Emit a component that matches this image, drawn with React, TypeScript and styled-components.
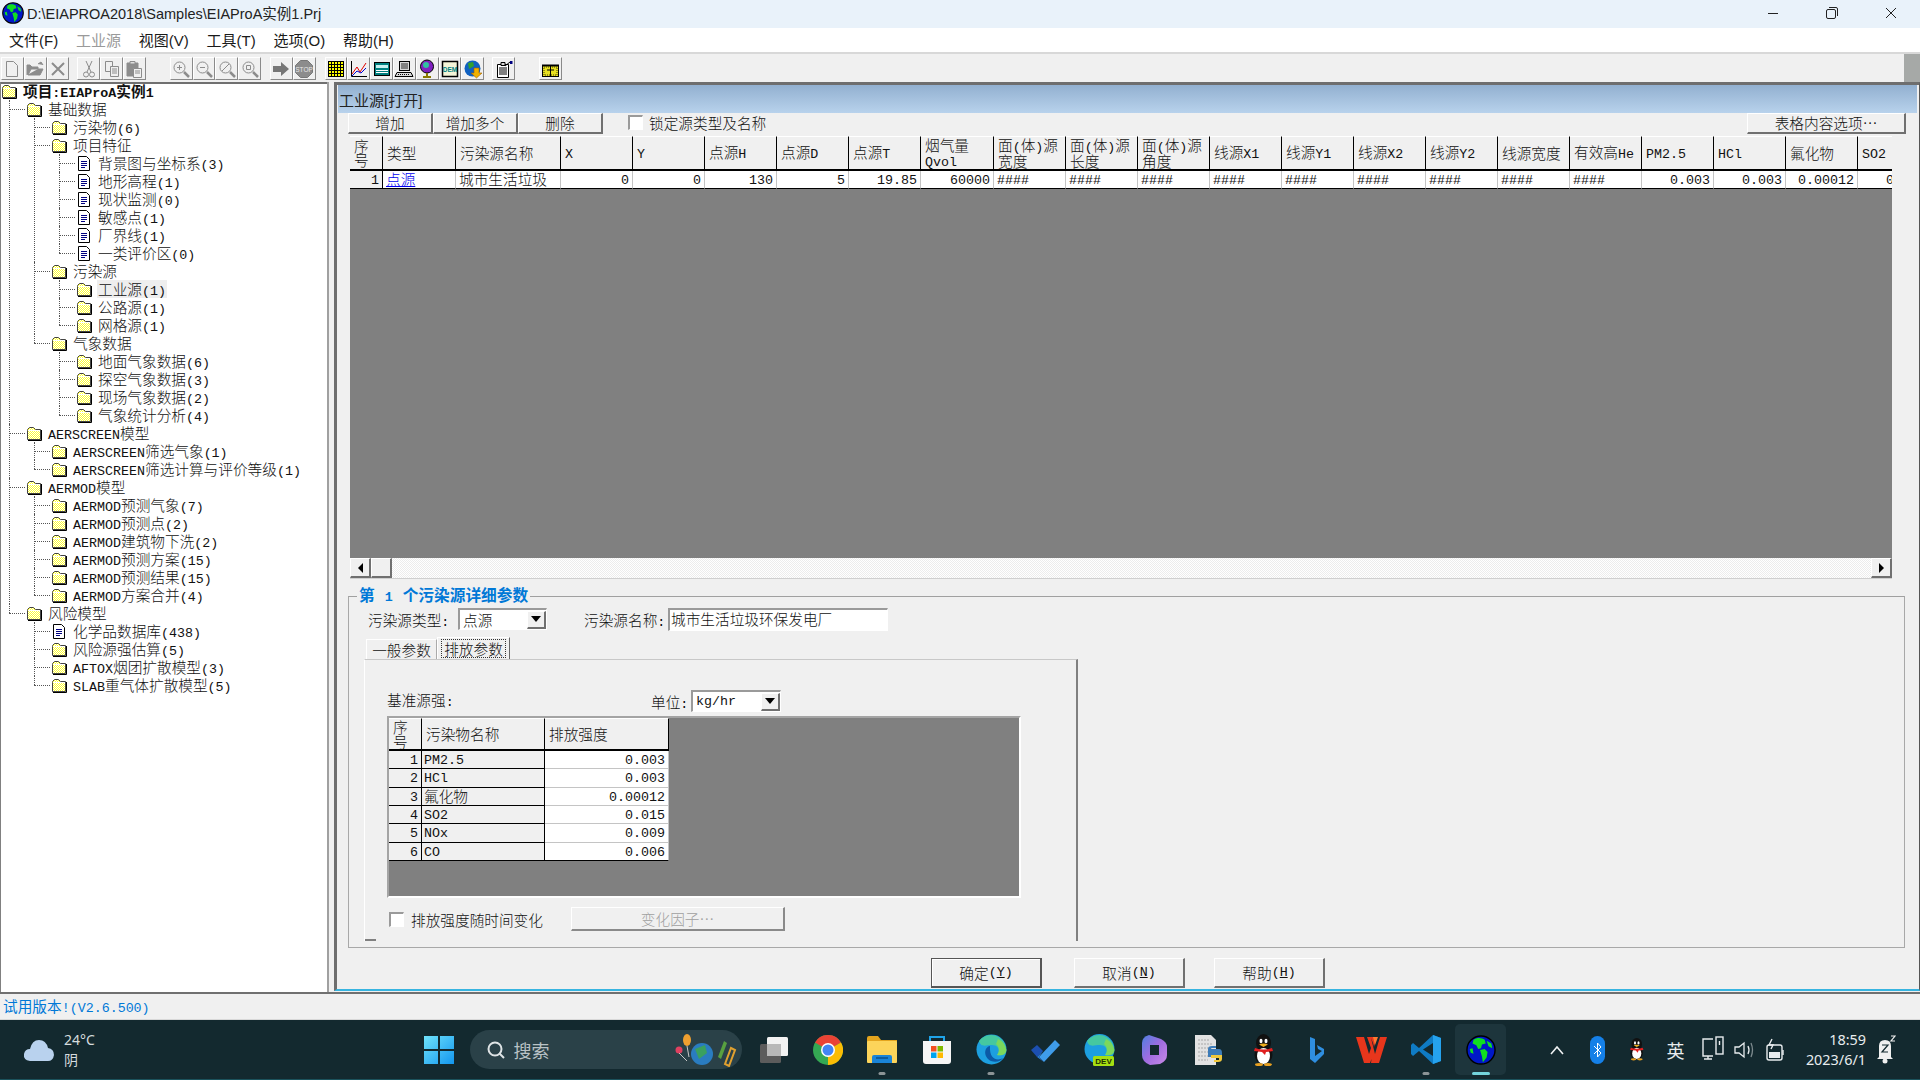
import React from "react";
import styled, { createGlobalStyle, css } from "styled-components";

const CJK = `"Noto Sans CJK SC", "Noto Sans", sans-serif`;
const MONO = `"Liberation Mono", "Noto Sans CJK SC", monospace`;
const SANS = `"Liberation Sans", "Noto Sans CJK SC", sans-serif`;

const Global = createGlobalStyle`
  html, body { margin: 0; padding: 0; background: #f0f0f0; }
  * { box-sizing: border-box; }
`;

const raised = css`
  border-style: solid;
  border-width: 1px 2px 2px 1px;
  border-color: #fff #707070 #707070 #fff;
  background: #f0f0f0;
`;
const sunken = css`
  border-style: solid;
  border-width: 2px 1px 1px 2px;
  border-color: #9a9a9a #fff #fff #9a9a9a;
`;

const Page = styled.div`
  width: 1920px; height: 1080px; overflow: hidden; display: flex; flex-direction: column;
  background: #f0f0f0; font-family: ${CJK}; font-size: 14.67px; color: #111; font-weight: 300;
`;
const TitleBar = styled.div`
  height: 28px; background: #e9f2fa; display: flex; align-items: center; padding: 0 0 2px 2px; flex: none;
`;
const TitleText = styled.span`
  margin-left: 3px; padding-bottom: 2px; font: 400 14.5px ${SANS}; color: #222;
`;
const WinControls = styled.div`margin-left: auto; display: flex;`;
const WinBtn = styled.div`width: 59px; height: 26px; display: flex; align-items: center; justify-content: center;`;

const MenuBar = styled.div`
  height: 24px; background: #fff; display: flex; align-items: center; padding: 0 0 2px 9px; gap: 17.8px; flex: none;
`;
const MenuItem = styled.span<{ $off?: boolean }>`
  font: 400 15px ${SANS}; color: ${(p) => (p.$off ? "#9a9a9a" : "#1a1a1a")};
`;

const ToolBar = styled.div`
  height: 30px; flex: none; display: flex; padding: 3px 0 0 1px; background: #f0f0f0;
  border-top: 2px solid #d8d8d8; position: relative;
`;
const ToolGroup = styled.div<{ $ml: number }>`display: flex; margin-left: ${(p) => p.$ml}px;`;
const ToolBtn = styled.div`
  width: 22.8px; height: 23px; display: flex; align-items: center; justify-content: center;
  border: 1px solid; border-color: #fff #8a8a8a #8a8a8a #fff;
`;
const ToolEnd = styled.div`margin: -3px 0 0 auto; width: 16px; height: 28px; background: #a6a9a7;`;

const Main = styled.div`display: flex; height: 910px; flex: none;`;

const TreePane = styled.div`
  width: 329px; flex: none; background: #fff; overflow: hidden; box-shadow: inset 0 2px 0 #707070;
  border-left: 1px solid #808080; border-right: 2px solid #a0a0a0;
`;
const TreeList = styled.ul<{ $nested?: boolean }>`
  list-style: none; margin: 0; padding: 0 0 0 ${(p) => (p.$nested ? 25 : 0)}px;
`;
const TreeItem = styled.li<{ $root?: boolean }>`
  position: relative;
  ${(p) =>
    !p.$root &&
    css`
      &::before { content: ""; position: absolute; left: -17px; top: 9px; width: 16px; border-top: 1px dotted #555; }
      &::after { content: ""; position: absolute; left: -17px; top: 0; bottom: 0; border-left: 1px dotted #555; }
      &:last-child::after { bottom: auto; height: 9px; }
    `}
`;
const TreeRow = styled.div`height: 18px; display: flex; align-items: center; gap: 5px; white-space: nowrap;`;
const TreeLabel = styled.span<{ $sel?: boolean; $bold?: boolean }>`
  padding: 0 1px; line-height: 18px; background: ${(p) => (p.$sel ? "#eeeeee" : "transparent")};
  font-weight: ${(p) => (p.$bold ? 700 : 300)}; color: #111;
`;
const Lat = styled.span`font-family: ${MONO}; font-size: 13.33px; font-weight: inherit; line-height: 1;`;

const Panel = styled.div`
  margin-left: 5px; width: 1586px; height: 909px; flex: none; position: relative;
  border-top: 3px solid #6e6e6e; border-left: 3px solid #6e6e6e; border-right: 1px solid #555;
  border-bottom: 2px solid #37b4e0; padding-left: 1px;
`;
const PanelHead = styled.div`
  height: 28px; margin-right: 2px; background: linear-gradient(#92b0d0, #b8d2ec);
  display: flex; align-items: flex-end; padding: 0 0 3px 1px; font: 400 15px ${SANS}; color: #222;
`;
const ActRow = styled.div`display: flex; height: 21px; padding-left: 10px; align-items: stretch; margin-bottom: 2px;`;
const ActBtn = styled.div`
  ${raised}; width: 85px; display: flex; align-items: center; justify-content: center; font-size: 14.67px; padding-bottom: 2px;
`;
const Check = styled.span`
  ${sunken}; display: inline-block; width: 15px; height: 15px; background: #fff; flex: none;
`;
const LockLabel = styled.label`display: flex; align-items: center; gap: 6px; margin-left: 25px; padding-bottom: 2px;`;
const OptBtn = styled(ActBtn)`width: 159px; margin-left: auto; margin-right: 13px;`;

const GridFrame = styled.div`
  margin-left: 12px; width: 1542px; height: 422px; background: #808080; overflow: hidden;
`;
const Table = styled.table<{ $w: number }>`
  table-layout: fixed; border-collapse: separate; border-spacing: 0; width: ${(p) => p.$w}px;
  font-size: 14.67px; background: transparent;
`;
const Head = styled.th`
  height: 33px; padding: 1px 0 0 4px; background: #f0f0f0; text-align: left; font-weight: 300;
  border-right: 1px solid #000; border-bottom: 2px solid #000; border-top: 1px solid #fff;
  line-height: 14.5px; overflow: hidden; vertical-align: middle; white-space: nowrap;
`;
const Cell = styled.td<{ $right?: boolean; $fixed?: boolean; $grid?: boolean; $tight?: boolean }>`
  height: 18px; padding: 0 ${(p) => (p.$tight ? 2 : 3)}px 1px; background: ${(p) => (p.$fixed ? "#f0f0f0" : "#fff")};
  text-align: ${(p) => (p.$right ? "right" : "left")}; overflow: hidden; white-space: nowrap;
  border-right: 1px solid ${(p) => (p.$fixed ? "#000" : "#c4c4c4")};
  border-bottom: ${(p) => (p.$grid ? "1px solid #c4c4c4" : "1px solid #000")};
  line-height: 14px; font-size: 14.67px;
`;
const LinkText = styled.span`color: #0000ee; text-decoration: underline;`;
const HBar = styled.div`
  margin-left: 12px; width: 1542px; height: 21px; display: flex; border-bottom: 1px solid #cfcfcf;
  background: repeating-conic-gradient(#fff 0 25%, #ececec 0 50%) 0 0 / 2px 2px;
`;
const ScrollBtn = styled.div<{ $w: number }>`
  ${raised}; width: ${(p) => p.$w}px; flex: none; display: flex; align-items: center; justify-content: center;
`;
const ScrollGap = styled.div`flex: 1;`;
const Arrow = styled.span<{ $dir: "left" | "right" | "down" }>`
  width: 0; height: 0; display: block;
  ${(p) =>
    p.$dir === "left"
      ? "border-top:5px solid transparent;border-bottom:5px solid transparent;border-right:5px solid #000;"
      : p.$dir === "right"
      ? "border-top:5px solid transparent;border-bottom:5px solid transparent;border-left:5px solid #000;"
      : "border-left:5px solid transparent;border-right:5px solid transparent;border-top:6px solid #000;"}
`;

const Group = styled.fieldset`
  margin: 8px 0 0 10px; width: 1557px; height: 361px; padding: 0; min-width: 0;
  border: 1px solid #a8a8a8; border-top-color: #a0a0a0; display: block;
`;
const GroupTitle = styled.legend`
  margin-left: 8px; padding: 0 2px; color: #0078d7; font-weight: 700; line-height: 16px; height: 18px; white-space: pre; font-size: 15.7px;
`;
const GroupNum = styled(Lat)`padding: 0 2px; font-size: 13.33px;`;
const FieldRow = styled.div`display: flex; align-items: center; height: 22px; margin-top: 3px; padding-left: 19px;`;
const FieldLabel = styled.span<{ $w?: number; $ml?: number; $lift?: number }>`
  width: ${(p) => (p.$w ? `${p.$w}px` : "auto")}; margin-left: ${(p) => p.$ml ?? 0}px; flex: none; white-space: nowrap;
  padding-bottom: ${(p) => p.$lift ?? 0}px;
`;
const Combo = styled.div<{ $w: number }>`
  ${sunken}; width: ${(p) => p.$w}px; height: 22px; background: #fff; display: flex; align-items: center;
  padding-left: 3px; justify-content: space-between;
`;
const ComboBtn = styled.div`
  ${raised}; width: 19px; height: 18px; display: flex; align-items: center; justify-content: center;
`;
const TextBox = styled.div`
  ${sunken}; width: 220px; height: 23px; background: #fff; padding-left: 1px; line-height: 17px; white-space: nowrap;
`;
const Tabs = styled.div`display: flex; align-items: flex-end; height: 23px; margin-top: 6px; padding-left: 17px;`;
const Tab = styled.div<{ $on?: boolean }>`
  width: ${(p) => (p.$on ? 73 : 71)}px; height: ${(p) => (p.$on ? 22 : 20)}px; display: flex; align-items: center; justify-content: center;
  border-left: 1px solid #fff; border-top: 1px solid #fff; border-right: 1px solid ${(p) => (p.$on ? "#666" : "#aaa")};
  font-size: 14.67px;
`;
const TabFocus = styled.span`outline: 1px dotted #333; padding: 0 2px; line-height: 17px;`;
const TabBody = styled.div`
  margin-left: 15px; width: 714px; height: 282px; position: relative; padding: 30px 0 0 22px;
  border-top: 1px solid #c8c8c8; border-left: 1px solid #fff; border-right: 2px solid #808080;
  &::after { content: ""; position: absolute; left: 0; bottom: 0; width: 11px; border-bottom: 2px solid #808080; }
`;
const UnitRow = styled.div`display: flex; align-items: center; height: 22px;`;
const SmallGrid = styled.div`
  margin-top: 4px; width: 634px; height: 182px; background: #808080; padding: 0;
  border-style: solid; border-width: 2px; border-color: #a4a4a4 #fff #fff #a4a4a4; overflow: hidden;
`;
const VaryRow = styled.div`display: flex; align-items: center; margin-top: 9px; height: 24px; padding-left: 2px;`;
const VaryLabel = styled.span`margin-left: 7px; width: 160px; white-space: nowrap;`;
const VaryBtn = styled.div`
  ${raised}; border-width: 1px 2px 2px 1px; width: 214px; height: 24px; display: flex; align-items: center; justify-content: center; color: #a0a0a0;
  border-color: #fff #8a8a8a #8a8a8a #fff;
`;
const FootRow = styled.div`display: flex; margin: 10px 0 0 593px;`;
const FootBtn = styled.div<{ $def?: boolean; $ml?: number }>`
  ${raised}; width: 111px; height: 30px; margin-left: ${(p) => p.$ml ?? 0}px; display: flex; align-items: center; justify-content: center;
  ${(p) => p.$def && "border: 1px solid #555; border-width: 1px 2px 2px 1px; outline: 0; box-shadow: inset 1px 1px 0 #fff;"}
`;

const Status = styled.div`
  height: 28px; flex: none; padding: 3px 0 0 3px; border-top: 2px solid #707070; color: #0078d7; font-size: 14.67px; line-height: 18px;
  border-bottom: 1px solid #d8d8d8; font-weight: 400; white-space: nowrap;
`;

const TaskBar = styled.div`
  flex: 1; background: #13292f; display: flex; align-items: stretch; color: #e8ecee; font-weight: 400;
  border-bottom: 1px solid #1b525c;
`;
const Weather = styled.div`width: 412px; flex: none; display: flex; align-items: center; padding-left: 23px; gap: 9px;`;
const WeatherText = styled.div`display: flex; flex-direction: column; gap: 2px; font: 400 14px/18px "Noto Sans", ${CJK}; color: #d6dcde;`;
const Slot = styled.div<{ $w?: number; $active?: boolean; $dot?: string }>`
  width: ${(p) => p.$w ?? 54.4}px; flex: none; position: relative; display: flex; align-items: center; justify-content: center;
  ${(p) =>
    p.$dot &&
    css`
      &::after {
        content: ""; position: absolute; bottom: 4px; left: 50%; transform: translateX(-50%); height: 3px; border-radius: 2px;
        width: ${p.$dot === "on" ? 18 : 7}px; background: ${p.$dot === "on" ? "#74d4dc" : "#8c9496"};
      }
    `}
  ${(p) => p.$active && css`&::before { content: ""; position: absolute; inset: 4px 2px 4px 2px; border-radius: 5px; background: #1d353c; }
    & > svg { position: relative; }`}
`;
const SearchPill = styled.div`
  width: 272px; margin: 10px 4px 10px 4px; border-radius: 20px; background: #2a4148; display: flex; align-items: center;
  padding-left: 16px; gap: 7px; color: #b9c2c5; font-size: 18px;
`;
const Deco = styled.div`margin-left: auto; margin-right: 5px; display: flex;`;
const Tray = styled.div`margin-left: auto; margin-right: 15px; display: flex; align-items: stretch;`;
const TrayGlyph = styled.span`font-size: 18px; color: #e8ecee;`;
const Clock = styled.div`
  width: 76px; flex: none; display: flex; flex-direction: column; align-items: flex-end; justify-content: center; gap: 2px;
  font: 400 14.4px/18px "Noto Sans", sans-serif; color: #e8ecee; white-space: nowrap;
`;

/* ---------- helpers ---------- */
function T({ s }: { s: string }) {
  const parts = s.split(/([\x20-\x7e]+)/).filter(Boolean);
  return (
    <>
      {parts.map((p, i) => (/^[\x20-\x7e]/.test(p) ? <Lat key={i}>{p}</Lat> : <React.Fragment key={i}>{p}</React.Fragment>))}
    </>
  );
}

const FolderIcon = () => (
  <svg width="16" height="15" viewBox="0 0 16 15" style={{ flex: "none" }}>
    <defs>
      <pattern id="dith" width="2" height="2" patternUnits="userSpaceOnUse">
        <rect width="2" height="2" fill="#ffff33" />
        <rect width="1" height="1" fill="#fff" />
        <rect x="1" y="1" width="1" height="1" fill="#fff" />
      </pattern>
    </defs>
    <path d="M1.5 4.5V3.5L3.5 1.5H7.5L9.5 3.5H14.5V13.5H1.5Z" fill="url(#dith)" stroke="#444" />
    <path d="M2 4.5H14" stroke="#fff" />
    <path d="M15.5 4V14.5H2" stroke="#000" fill="none" />
  </svg>
);
const DocIcon = () => (
  <svg width="16" height="15" viewBox="0 0 16 15" style={{ flex: "none" }}>
    <path d="M2.5 .5H10.5L13.5 3.5V14.5H2.5Z" fill="#fff" stroke="#000" />
    <path d="M5 5.5H11M5 7.5H11M5 9.5H11M5 11.5H9" stroke="#000080" />
  </svg>
);

type Node = { l: string; i?: "doc"; sel?: boolean; bold?: boolean; c?: Node[] };
const tree: Node = {
  l: "项目:EIAProA实例1",
  bold: true,
  c: [
    {
      l: "基础数据",
      c: [
        { l: "污染物(6)" },
        {
          l: "项目特征",
          c: [
            { l: "背景图与坐标系(3)", i: "doc" },
            { l: "地形高程(1)", i: "doc" },
            { l: "现状监测(0)", i: "doc" },
            { l: "敏感点(1)", i: "doc" },
            { l: "厂界线(1)", i: "doc" },
            { l: "一类评价区(0)", i: "doc" },
          ],
        },
        { l: "污染源", c: [{ l: "工业源(1)", sel: true }, { l: "公路源(1)" }, { l: "网格源(1)" }] },
        { l: "气象数据", c: [{ l: "地面气象数据(6)" }, { l: "探空气象数据(3)" }, { l: "现场气象数据(2)" }, { l: "气象统计分析(4)" }] },
      ],
    },
    { l: "AERSCREEN模型", c: [{ l: "AERSCREEN筛选气象(1)" }, { l: "AERSCREEN筛选计算与评价等级(1)" }] },
    {
      l: "AERMOD模型",
      c: [
        { l: "AERMOD预测气象(7)" },
        { l: "AERMOD预测点(2)" },
        { l: "AERMOD建筑物下洗(2)" },
        { l: "AERMOD预测方案(15)" },
        { l: "AERMOD预测结果(15)" },
        { l: "AERMOD方案合并(4)" },
      ],
    },
    {
      l: "风险模型",
      c: [{ l: "化学品数据库(438)", i: "doc" }, { l: "风险源强估算(5)" }, { l: "AFTOX烟团扩散模型(3)" }, { l: "SLAB重气体扩散模型(5)" }],
    },
  ],
};
function TreeNode({ n, root }: { n: Node; root?: boolean }) {
  return (
    <TreeItem $root={root}>
      <TreeRow>
        {n.i === "doc" ? <DocIcon /> : <FolderIcon />}
        <TreeLabel $sel={n.sel} $bold={n.bold}>
          <T s={n.l} />
        </TreeLabel>
      </TreeRow>
      {n.c && (
        <TreeList $nested>
          {n.c.map((k) => (
            <TreeNode key={k.l} n={k} />
          ))}
        </TreeList>
      )}
    </TreeItem>
  );
}

const G = "#8c8c8c";
const glyphs: Record<string, React.ReactNode> = {
  new: <path d="M4.5 2.5H11.5L15.5 6.5V17.5H4.5Z" fill="none" stroke={G} />,
  open: <path d="M2 16V6H5L7 8H13V10H6L3 16H15L18 10H13M13 5L16 3L18 6" fill={G} stroke={G} />,
  x: <path d="M4 4L16 16M16 4L4 16" stroke={G} strokeWidth="2" />,
  cut: <g fill="none" stroke={G}><path d="M7 2L12 13M13 2L8 13" /><circle cx="7" cy="15.5" r="2.5" /><circle cx="13" cy="15.5" r="2.5" /></g>,
  copy: <g fill="#f0f0f0" stroke={G}><path d="M3.5 2.5H10.5V12.5H3.5Z" /><path d="M8.5 7.5H16.5V17.5H8.5Z" /><path d="M10 10H15M10 12H15M10 14H15" /></g>,
  paste: <g stroke={G}><path d="M3 4H14V17H3Z" fill={G} /><path d="M6 2.5H11V5H6Z" fill="#ddd" /><path d="M9.5 9.5H17.5V18.5H9.5Z" fill="#f0f0f0" /><path d="M11 12H16M11 14H16" /></g>,
  zin: <g fill="none" stroke={G}><circle cx="8.5" cy="8.5" r="5.5" /><path d="M6 8.5H11M8.5 6V11" /><path d="M13 13L18 18" strokeWidth="2.5" /></g>,
  zout: <g fill="none" stroke={G}><circle cx="8.5" cy="8.5" r="5.5" /><path d="M6 8.5H11" /><path d="M13 13L18 18" strokeWidth="2.5" /></g>,
  zslash: <g fill="none" stroke={G}><circle cx="8.5" cy="8.5" r="5.5" /><path d="M5 12L12 5" /><path d="M13 13L18 18" strokeWidth="2.5" /></g>,
  zfit: <g fill="none" stroke={G}><circle cx="8.5" cy="8.5" r="5.5" /><path d="M6.5 6.5H10.5V10.5H6.5Z" /><path d="M13 13L18 18" strokeWidth="2.5" /></g>,
  arrow: <path d="M2 7H10V3L18 10L10 17V13H2Z" fill="#777" />,
  stop: (
    <g>
      <path d="M6.5 1.5H13.5L18.5 6.5V13.5L13.5 18.5H6.5L1.5 13.5V6.5Z" fill="#8c8c8c" stroke="#777" />
      <text x="10" y="12.5" fontSize="6.5" fill="#e8e8e8" textAnchor="middle" fontFamily="Liberation Sans">STOP</text>
    </g>
  ),
  grid: (
    <g>
      <rect x="2" y="2" width="16" height="16" fill="#ffff00" />
      <path d="M2 2.5H18M2 5.5H18M2 8.5H18M2 11.5H18M2 14.5H18M2 17.5H18M2.5 2V18M5.5 2V18M8.5 2V18M11.5 2V18M14.5 2V18M17.5 2V18" stroke="#000" />
    </g>
  ),
  chart: (
    <g fill="none">
      <path d="M2.5 2V17.5H18" stroke="#000" />
      <path d="M3 15L8 8L11 13L17 4" stroke="#e00000" />
      <path d="M3 17L8 12L12 14L17 9" stroke="#0000d0" />
    </g>
  ),
  panel: (
    <g>
      <rect x="2.5" y="3.5" width="15" height="13" fill="#008080" stroke="#000" />
      <rect x="4" y="6" width="12" height="3" fill="#c8f0f0" />
      <path d="M4 11.5H16M4 13.5H16" stroke="#fff" />
    </g>
  ),
  pc: (
    <g>
      <rect x="5.5" y="2.5" width="10" height="9" fill="#d8d8d8" stroke="#000" />
      <rect x="7" y="4" width="7" height="6" fill="#808080" />
      <path d="M3 13.5H17L19 17.5H1Z" fill="#d8d8d8" stroke="#000" />
      <path d="M4 15.5H16" stroke="#000" strokeDasharray="1 1" />
    </g>
  ),
  stand: (
    <g>
      <circle cx="10" cy="7.5" r="6.5" fill="#8020c0" stroke="#000" />
      <circle cx="9" cy="6" r="3" fill="#30c0a0" />
      <path d="M10 14V17M6 18H14" stroke="#8a7a00" strokeWidth="2" />
    </g>
  ),
  dem: (
    <g>
      <rect x="2.5" y="2.5" width="15" height="15" fill="#f4f4d8" stroke="#000" strokeWidth="1.5" />
      <text x="10" y="13" fontSize="6.5" textAnchor="middle" fill="#008080" fontWeight="700" fontFamily="Liberation Sans">DEM</text>
    </g>
  ),
  gdown: (
    <g>
      <circle cx="9.5" cy="9.5" r="8" fill="#1060c0" />
      <path d="M5 4L10 3L11 7L6 10Z" fill="#30a030" />
      <path d="M11 9H15L13 13Z" fill="#30a030" />
      <path d="M11 9H16V14H19L13.5 19L8 14H11Z" fill="#f0b000" stroke="#a06000" strokeWidth=".6" />
    </g>
  ),
  clip: (
    <g>
      <path d="M3.5 5.5H14.5V18.5H3.5Z" fill="#fff" stroke="#000" />
      <path d="M5 9H13M5 11H13M5 13H13M5 15H13" stroke="#000" />
      <path d="M7 3.5H11V6.5H7Z" fill="#d8d8d8" stroke="#000" />
      <path d="M16 2L18.5 2V5H16Z" fill="#000080" />
      <path d="M11 7L16 3" stroke="#000" />
    </g>
  ),
  box: (
    <g>
      <rect x="2.5" y="6.5" width="16" height="11" fill="#e8e020" stroke="#000" />
      <path d="M2 6.5H19" stroke="#000" strokeWidth="2" />
      <path d="M4 8H17V16H4Z" fill="none" stroke="#404000" strokeDasharray="1 1" />
      <path d="M10.5 7V17M7 11H14" stroke="#000" />
    </g>
  ),
};
const Tool = ({ n }: { n: string }) => (
  <ToolBtn>
    <svg width="20" height="20" viewBox="0 0 20 20">
      {glyphs[n]}
    </svg>
  </ToolBtn>
);
const toolGroups: [number, string[]][] = [
  [0, ["new", "open", "x"]],
  [8, ["cut", "copy", "paste"]],
  [24, ["zin", "zout", "zslash", "zfit"]],
  [9, ["arrow", "stop"]],
  [9, ["grid", "chart", "panel", "pc", "stand", "dem", "gdown"]],
  [8, ["clip"]],
  [24, ["box"]],
];

const Globe = ({ s }: { s: number }) => (
  <svg width={s} height={s} viewBox="0 0 32 32" style={{ flex: "none" }}>
    <circle cx="16" cy="16" r="15" fill="#0018c8" stroke="#000" strokeWidth="1.5" />
    <path d="M8 5C12 2 17 3 20 5L21 9L17 10L16 14L13 15L11 11L7 9Z" fill="#10e020" />
    <path d="M15 16L20 15L23 18L22 24L18 29L17 23Z" fill="#10e020" />
    <path d="M22 6L27 9L28 14L24 12Z" fill="#10e020" />
    <path d="M4 15L7 14L8 20L5 19Z" fill="#10e020" />
  </svg>
);

const FaceHead = ({ s }: { s: string }) => (
  <>
    <T s="面(体)源" /><br />
    {s}
  </>
);
const cols = [33, 73, 105, 72, 72, 72, 72, 72, 73, 72, 72, 72, 72, 72, 72, 72, 72, 72, 72, 72, 72, 72];
const heads: React.ReactNode[] = [
  <>序<br />号</>, "类型", "污染源名称", "X", "Y", "点源H", "点源D", "点源T", <>烟气量<br /><T s="Qvol" /></>,
  <FaceHead s="宽度" />, <FaceHead s="长度" />, <FaceHead s="角度" />,
  "线源X1", "线源Y1", "线源X2", "线源Y2", "线源宽度", "有效高He", "PM2.5", "HCl", "氟化物", "SO2",
];
const rowVals = ["0", "0", "130", "5", "19.85", "60000"];
const tailVals = ["0.003", "0.003", "0.00012", "0.015"];
const hashes = Array(9).fill("####");
const pollutants = [
  ["PM2.5", "0.003"], ["HCl", "0.003"], ["氟化物", "0.00012"], ["SO2", "0.015"], ["NOx", "0.009"], ["CO", "0.006"],
];

/* ---------- taskbar artwork ---------- */
const TaskView = () => (
  <svg width="29" height="28" viewBox="0 0 29 28">
    <rect x="8" y="1" width="21" height="19" rx="1.5" fill="#f2f2f2" />
    <rect x="1" y="8" width="21" height="19" rx="1.5" fill="#5c5c5c" />
    <rect x="8" y="8" width="14" height="12" fill="#b8b8b8" />
  </svg>
);
const Chrome = () => (
  <svg width="30" height="30" viewBox="0 0 30 30">
    <circle cx="15" cy="15" r="15" fill="#34a853" />
    <path d="M15 15L2 7.5A15 15 0 0 1 28 7.5Z" fill="#ea4335" />
    <path d="M15 15L28 7.5A15 15 0 0 1 15 30Z" fill="#fbbc04" />
    <circle cx="15" cy="15" r="7" fill="#fff" />
    <circle cx="15" cy="15" r="5.5" fill="#4285f4" />
  </svg>
);
const Explorer = () => (
  <svg width="30" height="30" viewBox="0 0 30 30">
    <path d="M0 3Q0 1 2 1H11L14 5H30V27H0Z" fill="#e4a51e" />
    <rect x="0" y="6" width="30" height="22" rx="1" fill="#fcd45a" />
    <path d="M5 28V22Q5 20 7 20H23Q25 20 25 22V28Z" fill="#1a84d8" />
    <path d="M9 23H21" stroke="#0b4f8c" strokeWidth="1.5" />
  </svg>
);
const Store = () => (
  <svg width="30" height="31" viewBox="0 0 30 31">
    <path d="M8 8V3H22V8" fill="none" stroke="#1fa3e8" strokeWidth="2" />
    <path d="M1 7H29V27Q29 30 26 30H4Q1 30 1 27Z" fill="#f6f6f6" />
    <rect x="9" y="12" width="5.5" height="5.5" fill="#f25022" />
    <rect x="15.5" y="12" width="5.5" height="5.5" fill="#7fba00" />
    <rect x="9" y="18.5" width="5.5" height="5.5" fill="#00a4ef" />
    <rect x="15.5" y="18.5" width="5.5" height="5.5" fill="#ffb900" />
  </svg>
);
const Edge = () => (
  <svg width="31" height="31" viewBox="0 0 31 31">
    <circle cx="15.5" cy="15.5" r="15" fill="#1d9fe0" />
    <path d="M3 7A15 15 0 0 1 30 15C30 20 25 22 21 21C25 18 23 11 16 11C10 11 5 14 3 7Z" fill="#45c8a0" />
    <path d="M22 5A15 15 0 0 1 30.5 16C30 21 25 22 21 21C24 17 23 12 20 10Z" fill="#7cd85c" />
    <path d="M14 12C8 13 7 23 15 27C20 29 25 27 27 24C22 27 13 26 14 12Z" fill="#0c5aa6" />
  </svg>
);
const Todo = () => (
  <svg width="31" height="26" viewBox="0 0 31 26">
    <path d="M1 13L7 8L13 14L7 20Z" fill="#1c4fb0" />
    <path d="M9 20L25 3L30 8L14 25Z" fill="#3f9cea" />
    <path d="M7 20L13 14L9 20L14 25Z" fill="#2a78d4" />
  </svg>
);
const EdgeDev = () => (
  <svg width="31" height="32" viewBox="0 0 31 32">
    <g><circle cx="15.5" cy="15" r="15" fill="#1d9fe0" />
      <path d="M3 7A15 15 0 0 1 30 15C30 20 25 22 21 21C25 18 23 11 16 11C10 11 5 14 3 7Z" fill="#45c8a0" />
      <path d="M22 5A15 15 0 0 1 30.5 16C30 21 25 22 21 21C24 17 23 12 20 10Z" fill="#7cd85c" />
    </g>
    <rect x="9" y="22" width="21" height="10" rx="1.5" fill="#a5e012" />
    <text x="19.5" y="30" fontSize="8" fontWeight="700" textAnchor="middle" fill="#203000" fontFamily="Liberation Sans">DEV</text>
  </svg>
);
const Copilot = () => (
  <svg width="27" height="32" viewBox="0 0 27 32">
    <defs>
      <linearGradient id="cop" x1="0" y1="0" x2="1" y2="1">
        <stop offset="0" stopColor="#4e7fe0" /><stop offset="0.5" stopColor="#a06ce0" /><stop offset="1" stopColor="#c98ae8" />
      </linearGradient>
    </defs>
    <path d="M8 1L20 5Q26 8 26 13V21Q26 27 19 30L9 31Q1 28 1 21V9Q1 3 8 1Z" fill="url(#cop)" />
    <path d="M9 11H18V21H9Z" fill="#13292f" />
  </svg>
);
const PyFile = () => (
  <svg width="29" height="32" viewBox="0 0 29 32">
    <path d="M1 1H17L22 6V31H1Z" fill="#e2e2e2" />
    <path d="M4 6H16M4 10H18M4 14H18M4 18H14M4 22H14M4 26H14" stroke="#a8a8a8" strokeDasharray="2 1" />
    <path d="M14 20V15Q14 12 18 12H22V14H17V15H25Q28 15 28 19V21H19Q17 21 17 23H14Z" fill="#3d7cb8" />
    <path d="M28 21V25Q28 28 24 28H20V26H25V24H17V21Z" fill="#f0c83c" />
  </svg>
);
const QQ = ({ s = 1 }: { s?: number }) => (
  <svg width={25 * s} height={32 * s} viewBox="0 0 25 32">
    <ellipse cx="12.5" cy="9" rx="7.5" ry="9" fill="#111" />
    <ellipse cx="12.5" cy="21" rx="9" ry="9" fill="#111" />
    <ellipse cx="12.5" cy="22" rx="6.5" ry="8" fill="#fff" />
    <ellipse cx="10" cy="7" rx="1.5" ry="2.2" fill="#fff" />
    <ellipse cx="15" cy="7" rx="1.5" ry="2.2" fill="#fff" />
    <path d="M8 10.5Q12.5 8.5 17 10.5L12.5 13Z" fill="#f0b020" />
    <path d="M4 14Q12.5 17 21 14L22 17L15 18L14 21L11 18L3 17Z" fill="#e02020" />
    <ellipse cx="8" cy="30.5" rx="4" ry="1.5" fill="#e8a020" />
    <ellipse cx="17" cy="30.5" rx="4" ry="1.5" fill="#e8a020" />
  </svg>
);
const Bing = () => (
  <svg width="16" height="28" viewBox="0 0 16 28">
    <path d="M1 1L6 3V20L13 15L9 13L8 9L15 13V18L6 27L1 23Z" fill="#2f8ee0" />
  </svg>
);
const Wps = () => (
  <svg width="31" height="29" viewBox="0 0 31 29">
    <path d="M0 2H8L13 19L15 13L11 2H21L18 12L17 8L15 3L19 19L24 2H31L23 28H15L15.500 24L14 28H8Z" fill="#e8361c" />
    <path d="M17 2H22L19 10Z" fill="#ff7a30" />
  </svg>
);
const VsCode = () => (
  <svg width="31" height="31" viewBox="0 0 31 31">
    <path d="M22 1L30 4V27L22 30L8 17L2 22L0 20V11L2 9L8 14Z" fill="#0f7bc4" />
    <path d="M22 1L30 4V27L22 30Z" fill="#25a2ee" />
    <path d="M22 9L12 15.500L22 22Z" fill="#13292f" />
  </svg>
);
const WinLogo = () => (
  <svg width="30" height="29" viewBox="0 0 30 29">
    <defs>
      <linearGradient id="win" x1="0" y1="0" x2="1" y2="1">
        <stop offset="0" stopColor="#6fe3fb" /><stop offset="1" stopColor="#1396ee" />
      </linearGradient>
    </defs>
    <path d="M0 1H14V14H0ZM16 1H30V14H16ZM0 16H14V29H0ZM16 16H30V29H16Z" fill="url(#win)" />
  </svg>
);
const Cloud = () => (
  <svg width="32" height="24" viewBox="0 0 32 24">
    <path d="M7 23Q0 22 1 16Q2 11 7 11Q9 2 16 2Q23 2 25 10Q31 11 31 17Q30 23 25 23Z" fill="#b9d2ee" />
  </svg>
);
const DecoArt = () => (
  <svg width="62" height="34" viewBox="0 0 62 34">
    <ellipse cx="12" cy="7" rx="4" ry="6" fill="#f0a030" />
    <circle cx="4" cy="17" r="3.5" fill="#e04060" />
    <path d="M12 13L14 24M4 20L12 28" stroke="#c8c8c8" />
    <circle cx="27" cy="21" r="11" fill="#2a7cc0" />
    <path d="M20 16L30 12L32 20L24 26Z" fill="#3aa060" />
    <path d="M43 24L49 8L52 10L46 26Z" fill="#58a040" />
    <path d="M50 31L56 15L60 17L54 33Z" fill="none" stroke="#e0a030" strokeWidth="2" />
  </svg>
);
const Bluetooth = () => (
  <svg width="15" height="28" viewBox="0 0 15 28">
    <rect width="15" height="28" rx="7.500" fill="#1580e8" />
    <path d="M4 10L11 17L7.500 21V7L11 11L4 18" fill="none" stroke="#fff" />
  </svg>
);
const Net = () => (
  <svg width="24" height="28" viewBox="0 0 24 28" fill="none" stroke="#e8ecee" strokeWidth="1.4">
    <path d="M12 3H2V20H12M3 23H11M7 20V23" />
    <rect x="15" y="1" width="7" height="17" />
    <path d="M18.500 5V9" />
  </svg>
);
const Speaker = () => (
  <svg width="24" height="24" viewBox="0 0 24 24" fill="none" stroke="#e8ecee" strokeWidth="1.3">
    <path d="M2 9H6L11 5V19L6 15H2Z" />
    <path d="M15 8Q17 12 15 16" />
    <path d="M18 5Q21 12 18 19" stroke="#7d8a8e" />
  </svg>
);
const Battery = () => (
  <svg width="20" height="26" viewBox="0 0 20 26" fill="none" stroke="#e8ecee" strokeWidth="1.4">
    <rect x="2" y="8" width="15" height="15" rx="2" />
    <path d="M18 13V18" />
    <path d="M7 2L4 8H8L6 12" />
    <rect x="4" y="15" width="11" height="6" fill="#e8ecee" stroke="none" />
  </svg>
);
const Bell = () => (
  <svg width="20" height="30" viewBox="0 0 20 30">
    <path d="M3 22V11Q3 5 9 5Q15 5 15 11V22L17 24H1Z" fill="#f0f0f0" />
    <circle cx="9" cy="26" r="2.500" fill="#f0f0f0" />
    <path d="M6 10H12L6 17H12" stroke="#13292f" strokeWidth="1.2" fill="none" />
    <path d="M15 1H19L15 6H19" stroke="#f0f0f0" strokeWidth="1.2" fill="none" />
  </svg>
);

export default function App() {
  return (
    <Page>
      <Global />
      <TitleBar>
        <Globe s={22} />
        <TitleText>D:\EIAPROA2018\Samples\EIAProA实例1.Prj</TitleText>
        <WinControls>
          <WinBtn>
            <svg width="12" height="12" viewBox="0 0 12 12"><path d="M1 6.5H11" stroke="#222" /></svg>
          </WinBtn>
          <WinBtn>
            <svg width="12" height="12" viewBox="0 0 12 12" fill="none" stroke="#222"><rect x=".5" y="2.500" width="9" height="9" rx="1.500" /><path d="M3 .5H10Q11.500 .5 11.500 2V9" /></svg>
          </WinBtn>
          <WinBtn>
            <svg width="12" height="12" viewBox="0 0 12 12"><path d="M1 1L11 11M11 1L1 11" stroke="#222" /></svg>
          </WinBtn>
        </WinControls>
      </TitleBar>
      <MenuBar>
        <MenuItem>文件(F)</MenuItem>
        <MenuItem $off>工业源</MenuItem>
        <MenuItem>视图(V)</MenuItem>
        <MenuItem>工具(T)</MenuItem>
        <MenuItem>选项(O)</MenuItem>
        <MenuItem>帮助(H)</MenuItem>
      </MenuBar>
      <ToolBar>
        {toolGroups.map(([ml, names], i) => (
          <ToolGroup key={i} $ml={ml}>
            {names.map((n) => (
              <Tool key={n} n={n} />
            ))}
          </ToolGroup>
        ))}
        <ToolEnd />
      </ToolBar>
      <Main>
        <TreePane>
          <TreeList>
            <TreeNode n={tree} root />
          </TreeList>
        </TreePane>
        <Panel>
          <PanelHead>工业源[打开]</PanelHead>
          <ActRow>
            <ActBtn>增加</ActBtn>
            <ActBtn>增加多个</ActBtn>
            <ActBtn>删除</ActBtn>
            <LockLabel>
              <Check />
              锁定源类型及名称
            </LockLabel>
            <OptBtn>表格内容选项…</OptBtn>
          </ActRow>
          <GridFrame>
            <Table $w={cols.reduce((a, b) => a + b, 0)}>
              <colgroup>
                {cols.map((c, i) => (
                  <col key={i} width={c} />
                ))}
              </colgroup>
              <thead>
                <tr>
                  {heads.map((h, i) => (
                    <Head key={i}>{typeof h === "string" ? <T s={h} /> : h}</Head>
                  ))}
                </tr>
              </thead>
              <tbody>
                <tr>
                  <Cell $right $fixed><Lat>1</Lat></Cell>
                  <Cell><LinkText>点源</LinkText></Cell>
                  <Cell>城市生活垃圾</Cell>
                  {rowVals.map((v, i) => (
                    <Cell key={i} $right><Lat>{v}</Lat></Cell>
                  ))}
                  {hashes.map((v, i) => (
                    <Cell key={i}><Lat>{v}</Lat></Cell>
                  ))}
                  {tailVals.map((v, i) => (
                    <Cell key={i} $right><Lat>{v}</Lat></Cell>
                  ))}
                </tr>
              </tbody>
            </Table>
          </GridFrame>
          <HBar>
            <ScrollBtn $w={21}><Arrow $dir="left" /></ScrollBtn>
            <ScrollBtn $w={21} />
            <ScrollGap />
            <ScrollBtn $w={21}><Arrow $dir="right" /></ScrollBtn>
          </HBar>
          <Group>
            <GroupTitle>
              第<GroupNum> 1 </GroupNum>个污染源详细参数
            </GroupTitle>
            <FieldRow>
              <FieldLabel $w={90}>污染源类型<Lat>:</Lat></FieldLabel>
              <Combo $w={89}>
                点源
                <ComboBtn><Arrow $dir="down" /></ComboBtn>
              </Combo>
              <FieldLabel $ml={37} $w={84}>污染源名称<Lat>:</Lat></FieldLabel>
              <TextBox>城市生活垃圾环保发电厂</TextBox>
            </FieldRow>
            <Tabs>
              <Tab>一般参数</Tab>
              <Tab $on><TabFocus>排放参数</TabFocus></Tab>
            </Tabs>
            <TabBody>
              <UnitRow>
                <FieldLabel $w={264} $lift={3}>基准源强<Lat>:</Lat></FieldLabel>
                <FieldLabel $w={40}>单位<Lat>:</Lat></FieldLabel>
                <Combo $w={90}>
                  <Lat>kg/hr</Lat>
                  <ComboBtn><Arrow $dir="down" /></ComboBtn>
                </Combo>
              </UnitRow>
              <SmallGrid>
                <Table $w={280}>
                  <colgroup>
                    <col width={33} />
                    <col width={123} />
                    <col width={124} />
                  </colgroup>
                  <thead>
                    <tr>
                      <Head>序<br />号</Head>
                      <Head>污染物名称</Head>
                      <Head>排放强度</Head>
                    </tr>
                  </thead>
                  <tbody>
                    {pollutants.map(([n, v], i) => (
                      <tr key={n}>
                        <Cell $right $fixed><Lat>{i + 1}</Lat></Cell>
                        <Cell $fixed $tight><T s={n} /></Cell>
                        <Cell $right $grid={i < 5}><Lat>{v}</Lat></Cell>
                      </tr>
                    ))}
                  </tbody>
                </Table>
              </SmallGrid>
              <VaryRow>
                <Check />
                <VaryLabel>排放强度随时间变化</VaryLabel>
                <VaryBtn>变化因子…</VaryBtn>
              </VaryRow>
            </TabBody>
          </Group>
          <FootRow>
            <FootBtn $def>确定<Lat>(<u>Y</u>)</Lat></FootBtn>
            <FootBtn $ml={32}>取消<Lat>(<u>N</u>)</Lat></FootBtn>
            <FootBtn $ml={29}>帮助<Lat>(<u>H</u>)</Lat></FootBtn>
          </FootRow>
        </Panel>
      </Main>
      <Status>试用版本<Lat>!(V2.6.500)</Lat></Status>
      <TaskBar>
        <Weather>
          <Cloud />
          <WeatherText>
            <span>24°C</span>
            <span>阴</span>
          </WeatherText>
        </Weather>
        <Slot><WinLogo /></Slot>
        <SearchPill>
          <svg width="20" height="20" viewBox="0 0 20 20" fill="none" stroke="#dfe4e6" strokeWidth="2">
            <circle cx="9" cy="9" r="6.500" />
            <path d="M13.500 13.500L18 18" />
          </svg>
          搜索
          <Deco><DecoArt /></Deco>
        </SearchPill>
        <Slot><TaskView /></Slot>
        <Slot><Chrome /></Slot>
        <Slot $dot="dim"><Explorer /></Slot>
        <Slot><Store /></Slot>
        <Slot $dot="dim"><Edge /></Slot>
        <Slot><Todo /></Slot>
        <Slot><EdgeDev /></Slot>
        <Slot><Copilot /></Slot>
        <Slot><PyFile /></Slot>
        <Slot><QQ /></Slot>
        <Slot><Bing /></Slot>
        <Slot><Wps /></Slot>
        <Slot $dot="dim"><VsCode /></Slot>
        <Slot $active $dot="on"><Globe s={30} /></Slot>
        <Tray>
          <Slot $w={40}>
            <svg width="14" height="10" viewBox="0 0 14 10" fill="none" stroke="#eef1f2" strokeWidth="1.6"><path d="M1 9L7 2L13 9" /></svg>
          </Slot>
          <Slot $w={40}><Bluetooth /></Slot>
          <Slot $w={39}><QQ s={0.7} /></Slot>
          <Slot $w={39}><TrayGlyph>英</TrayGlyph></Slot>
          <Slot $w={35}><Net /></Slot>
          <Slot $w={30}><Speaker /></Slot>
          <Slot $w={30}><Battery /></Slot>
          <Clock>
            <span>18:59</span>
            <span>2023/6/1</span>
          </Clock>
          <Slot $w={39}><Bell /></Slot>
        </Tray>
      </TaskBar>
    </Page>
  );
}
